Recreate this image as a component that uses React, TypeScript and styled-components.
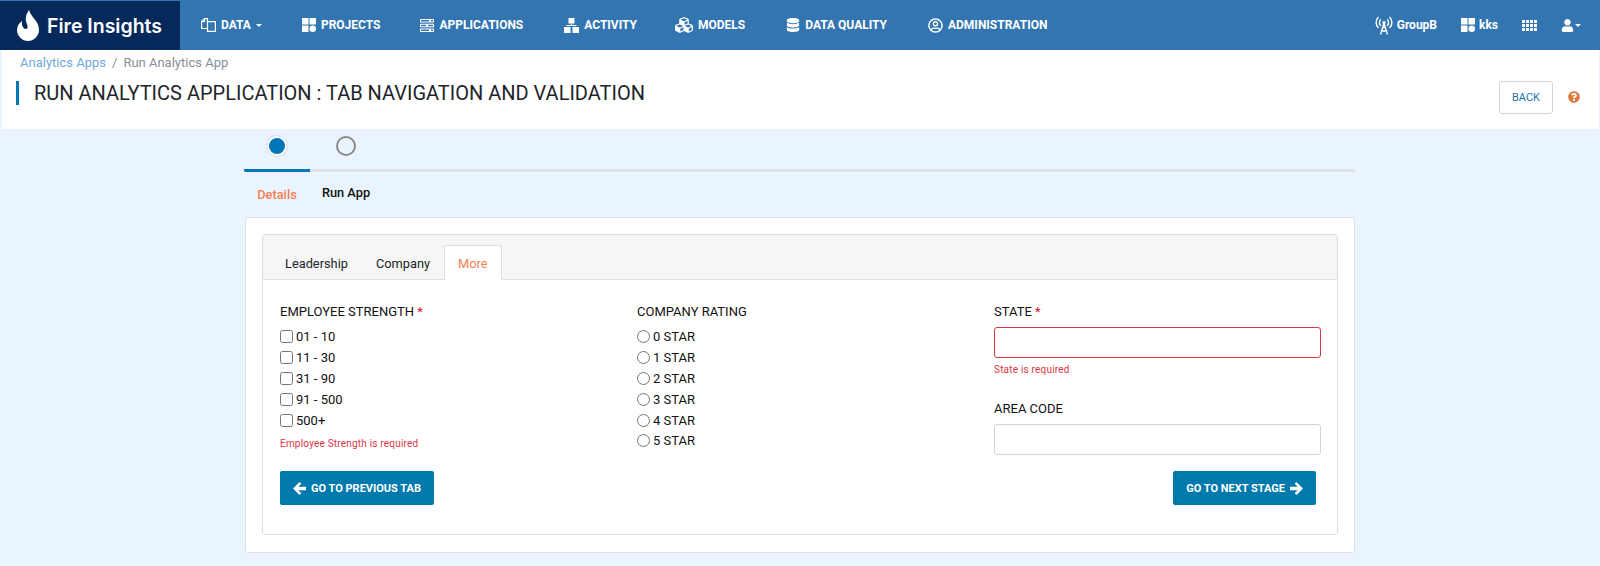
import React, { FC, ReactNode } from "react";
import styled, { createGlobalStyle } from "styled-components";
import {
  FaCubes,
  FaDatabase,
  FaQuestionCircle,
  FaRegUserCircle,
  FaUser,
} from "react-icons/fa";

const GlobalStyle = createGlobalStyle`
  html, body {
    margin: 0;
    padding: 0;
    height: 100%;
    background: #e9f4fe;
    font-family: Roboto, "Liberation Sans", sans-serif;
    color: #212529;
    overflow: hidden;
  }
  * {
    box-sizing: border-box;
  }
`;

const FlameLogo: FC = () => (
  <svg width="22" height="31" viewBox="0 0 22 31" fill="#fff">
    <path d="M12 0C13 4 16 7 19 11C21 14 22 17 22 20C22 26 17 31 11 31C5 31 0 26 0 20C0 16 2 13 5 11C4.500 15 6 19 9 19C11 19 11 16 9.500 13C8 9 9 4 12 0Z" />
  </svg>
);

const DataIcon: FC = () => (
  <svg width="15" height="14" viewBox="0 0 15 14" fill="none" stroke="#fff" strokeWidth="1.200">
    <path d="M6.500 3.500V0.600H3.500L0.600 3.500V10.500H6.500" />
    <path d="M9.500 3.600H6.500V13.400H14.400V3.600H9.500" />
    <path d="M3.500 0.600V3.500H0.600" />
  </svg>
);

const ProjectsIcon: FC = () => (
  <svg width="14" height="14" viewBox="0 0 14 14" fill="#fff">
    <rect x="0" y="0" width="6.500" height="6.500" />
    <rect x="7.500" y="0" width="6.500" height="6.500" />
    <rect x="0" y="7.500" width="6.500" height="6.500" />
    <circle cx="10.750" cy="10.750" r="3.250" />
  </svg>
);

const ApplicationsIcon: FC = () => (
  <svg width="14" height="13" viewBox="0 0 14 13" fill="#fff">
    <path
      fillRule="evenodd"
      d="M0 0H14V3.400H0ZM1 1V2.400H9V1ZM11 1V2.400H13V1ZM0 4.800H14V8.200H0ZM1 5.800V7.200H6V5.800ZM8 5.800V7.200H13V5.800ZM0 9.600H14V13H0ZM1 10.600V12H9V10.600ZM11 10.600V12H13V10.600Z"
    />
  </svg>
);

const ActivityIcon: FC = () => (
  <svg width="15" height="15" viewBox="0 0 15 15" fill="#fff">
    <rect x="4.500" y="0" width="6" height="5.500" />
    <rect x="7" y="5.500" width="1" height="2" />
    <rect x="2.500" y="7" width="10" height="1" />
    <rect x="0" y="9" width="6.500" height="6" />
    <rect x="8.500" y="9" width="6.500" height="6" />
  </svg>
);

const TowerIcon: FC = () => (
  <svg width="18" height="19" viewBox="0 0 18 19" fill="none" stroke="#fff" strokeWidth="1.400">
    <path d="M3.500 1C0.300 4 0.300 9 3.500 12" />
    <path d="M14.500 1C17.700 4 17.700 9 14.500 12" />
    <path d="M5.800 3.200C4 5 4 8 5.800 9.800" />
    <path d="M12.200 3.200C14 5 14 8 12.200 9.800" />
    <circle cx="9" cy="6.500" r="1.600" fill="#fff" stroke="none" />
    <path d="M9 7L5.500 18.500M9 7L12.500 18.500M6.500 15H11.500M7.500 11.500H10.500" />
  </svg>
);

const TableIcon: FC = () => (
  <svg width="15" height="11" viewBox="0 0 15 11" fill="#fff">
    {[0, 4, 8].map((y) =>
      [0, 4, 8, 12].map((x) => <rect key={`${x}-${y}`} x={x} y={y} width="3" height="3" />)
    )}
  </svg>
);

const LeftArrow: FC = () => (
  <svg width="13" height="13" viewBox="0 0 13 13" fill="#fff">
    <path d="M6.500 0L0 6.500L6.500 13L8.300 11.200L5.300 8.200H13V4.800H5.300L8.300 1.800Z" />
  </svg>
);

const RightArrow: FC = () => (
  <svg width="13" height="13" viewBox="0 0 13 13" fill="#fff">
    <path d="M6.500 0L13 6.500L6.500 13L4.700 11.200L7.700 8.200H0V4.800H7.700L4.700 1.800Z" />
  </svg>
);

const Caret = styled.span`
  display: inline-block;
  width: 0;
  height: 0;
  border-top: 3.800px solid #fff;
  border-left: 3.800px solid transparent;
  border-right: 3.800px solid transparent;
`;

const Page = styled.div`
  display: flex;
  flex-direction: column;
  min-height: 566px;
`;

const NavBar = styled.nav`
  display: flex;
  align-items: stretch;
  height: 50px;
  background: #3375b0;
`;

const Brand = styled.div`
  display: flex;
  align-items: center;
  gap: 8px;
  width: 180px;
  height: 49px;
  margin-top: 1px;
  padding-left: 17px;
  background: #06295b;
  color: #fff;
  font-family: Inter, "Open Sans", sans-serif;
  font-size: 19.500px;
  font-weight: 600;
  white-space: nowrap;
`;

const NavLeft = styled.div`
  display: flex;
  align-items: center;
  gap: 40px;
  margin-left: 21px;
  flex: 1;
`;

const NavRight = styled.div`
  display: flex;
  align-items: center;
  gap: 24px;
  padding-right: 19px;
`;

const NavItem = styled.a<{ $extra?: number; $gap?: number }>`
  display: flex;
  align-items: center;
  gap: ${(p) => p.$gap ?? 5}px;
  margin-left: ${(p) => p.$extra ?? 0}px;
  color: #fff;
  font-size: 12px;
  font-weight: 700;
  white-space: nowrap;
  svg {
    flex: none;
  }
`;

const PageHead = styled.header`
  display: flex;
  justify-content: space-between;
  height: 79px;
  margin: 0 1px 0 2px;
  background: #fff;
`;

const HeadLeft = styled.div`
  display: flex;
  flex-direction: column;
`;

const Crumbs = styled.div`
  display: flex;
  gap: 6px;
  height: 31px;
  padding: 5px 0 0 18px;
  font-size: 13px;
  line-height: 15px;
  color: #868e96;
`;

const CrumbLink = styled.a`
  color: #6fa8dc;
`;

const Title = styled.h1`
  margin: 0 0 0 14px;
  padding-left: 15px;
  height: 24px;
  border-left: 3px solid #0076b4;
  font-size: 20px;
  font-weight: 400;
  line-height: 24px;
  color: #212529;
  white-space: nowrap;
`;

const HeadRight = styled.div`
  display: flex;
  align-items: center;
  gap: 15px;
  height: 32px;
  margin-top: 31px;
  padding-right: 19px;
  color: #dc7b3c;
`;

const BackButton = styled.button`
  width: 54px;
  height: 33px;
  padding: 0;
  background: #fff;
  border: 1px solid #ced4da;
  border-radius: 3px;
  color: #1f6fa8;
  font-family: inherit;
  font-size: 11px;
  font-weight: 400;
`;

const Wizard = styled.main`
  width: 1111px;
  margin: 0 auto 0 244px;
`;

const Steps = styled.div`
  display: flex;
  height: 43px;
  border-bottom: 3px solid #dfe1e6;
`;

const Step = styled.div<{ $active?: boolean }>`
  display: flex;
  justify-content: center;
  align-items: center;
  width: 66px;
  height: 43px;
  padding-bottom: 6px;
  margin-right: 3px;
  border-bottom: 3px solid ${(p) => (p.$active ? "#0076b9" : "transparent")};
  border-radius: 0 0 0 2px;
`;

const StepDot = styled.span<{ $active?: boolean }>`
  width: 20px;
  height: 20px;
  border-radius: 50%;
  ${(p) =>
    p.$active
      ? `background: #0076b9; border: 2px solid #fff; box-shadow: 0 0 2px rgba(0,0,0,.25);`
      : `background: transparent; border: 2px solid #8a8a8a;`}
`;

const StepLabels = styled.div`
  display: flex;
  height: 45px;
  font-size: 12.800px;
  font-weight: 500;
`;

const StepLabel = styled.div<{ $active?: boolean }>`
  width: ${(p) => (p.$active ? 66 : 72)}px;
  text-align: center;
  padding-top: ${(p) => (p.$active ? 15 : 13)}px;
  color: ${(p) => (p.$active ? "#f97f51" : "#111")};
`;

const OuterCard = styled.section`
  height: 336px;
  margin-left: 1px;
  padding: 16px 16px 0;
  background: #fff;
  border: 1px solid #dcdfe3;
  border-radius: 3px;
`;

const InnerCard = styled.div`
  height: 301px;
  border: 1px solid #dcdfe3;
  border-radius: 3px;
`;

const TabBar = styled.div`
  display: flex;
  align-items: flex-end;
  height: 45px;
  padding-left: 8px;
  background: #f6f6f6;
  border-bottom: 1px solid #dcdfe3;
`;

const Tab = styled.div<{ $active?: boolean }>`
  height: 35px;
  margin-bottom: -1px;
  padding: 0 13px;
  border: 1px solid ${(p) => (p.$active ? "#dcdfe3" : "transparent")};
  border-bottom-color: ${(p) => (p.$active ? "#fff" : "transparent")};
  border-radius: 3px 3px 0 0;
  background: ${(p) => (p.$active ? "#fff" : "transparent")};
  color: ${(p) => (p.$active ? "#f97f51" : "#212529")};
  font-size: 12.800px;
  line-height: 35px;
`;

const FormGrid = styled.div`
  display: grid;
  grid-template-columns: repeat(3, 357px);
  padding: 0 2px;
  height: 176px;
`;

const Column = styled.div`
  padding: 24px 15px 0;
`;

const FieldLabel = styled.label<{ $top?: number }>`
  display: block;
  height: 16px;
  margin-top: ${(p) => p.$top ?? 0}px;
  font-size: 13px;
  line-height: 16px;
  color: #111;
  white-space: nowrap;
`;

const Required = styled.span`
  color: #e8112d;
`;

const OptionList = styled.div`
  display: flex;
  flex-direction: column;
  margin-top: 6px;
`;

const Option = styled.label`
  display: flex;
  align-items: center;
  height: 20.900px;
  font-size: 13px;
  color: #111;
  input {
    width: 13px;
    height: 13px;
    margin: 0 3px 0 0;
  }
`;

const ErrorText = styled.div<{ $top: number }>`
  margin-top: ${(p) => p.$top}px;
  height: 12px;
  font-size: 10px;
  line-height: 12px;
  letter-spacing: 0.200px;
  color: #dc3545;
`;

const TextInput = styled.input<{ $invalid?: boolean }>`
  display: block;
  width: 100%;
  height: 31px;
  margin-top: 7px;
  background: #fff;
  border: 1px solid ${(p) => (p.$invalid ? "#dc3545" : "#ced4da")};
  border-radius: 3px;
  outline: none;
`;

const Actions = styled.div`
  display: flex;
  justify-content: space-between;
  padding: 15px 21px 0 17px;
`;

const ActionButton = styled.button`
  display: flex;
  align-items: center;
  gap: 5px;
  height: 34px;
  padding: 0 13px;
  background: #0079ac;
  border: none;
  border-radius: 2px;
  color: #fff;
  font-family: inherit;
  font-size: 11px;
  font-weight: 700;
  white-space: nowrap;
`;

const Field: FC<{ label: string; required?: boolean }> = ({ label, required }) => (
  <FieldLabel>
    {label} {required && <Required>*</Required>}
  </FieldLabel>
);

const navItems: { icon: ReactNode; label: string; caret?: boolean; extra?: number }[] = [
  { icon: <DataIcon />, label: "DATA", caret: true },
  { icon: <ProjectsIcon />, label: "PROJECTS" },
  { icon: <ApplicationsIcon />, label: "APPLICATIONS" },
  { icon: <ActivityIcon />, label: "ACTIVITY", extra: 1 },
  { icon: <FaCubes size={18} />, label: "MODELS", extra: -2 },
  { icon: <FaDatabase size={14} />, label: "DATA QUALITY", extra: 1 },
  { icon: <FaRegUserCircle size={15} />, label: "ADMINISTRATION", extra: 1 },
];

const strengths = ["01 - 10", "11 - 30", "31 - 90", "91 - 500", "500+"];
const ratings = ["0 STAR", "1 STAR", "2 STAR", "3 STAR", "4 STAR", "5 STAR"];

const App: FC = () => {
  return (
    <Page>
      <GlobalStyle />
      <NavBar>
        <Brand>
          <FlameLogo />
          Fire Insights
        </Brand>
        <NavLeft>
          {navItems.map((item) => (
            <NavItem key={item.label} $extra={item.extra}>
              {item.icon}
              {item.label}
              {item.caret && <Caret />}
            </NavItem>
          ))}
        </NavLeft>
        <NavRight>
          <NavItem $gap={4}>
            <TowerIcon />
            GroupB
          </NavItem>
          <NavItem $gap={4}>
            <ProjectsIcon />
            kks
          </NavItem>
          <NavItem>
            <TableIcon />
          </NavItem>
          <NavItem $gap={1}>
            <FaUser size={13} />
            <Caret />
          </NavItem>
        </NavRight>
      </NavBar>

      <PageHead>
        <HeadLeft>
          <Crumbs>
            <CrumbLink>Analytics Apps</CrumbLink>
            <span>/</span>
            <span>Run Analytics App</span>
          </Crumbs>
          <Title>RUN ANALYTICS APPLICATION : TAB NAVIGATION AND VALIDATION</Title>
        </HeadLeft>
        <HeadRight>
          <BackButton>BACK</BackButton>
          <FaQuestionCircle size={12} />
        </HeadRight>
      </PageHead>

      <Wizard>
        <Steps>
          <Step $active>
            <StepDot $active />
          </Step>
          <Step>
            <StepDot />
          </Step>
        </Steps>
        <StepLabels>
          <StepLabel $active>Details</StepLabel>
          <StepLabel>Run App</StepLabel>
        </StepLabels>
        <OuterCard>
          <InnerCard>
            <TabBar>
              <Tab>Leadership</Tab>
              <Tab>Company</Tab>
              <Tab $active>More</Tab>
            </TabBar>
            <FormGrid>
              <Column>
                <Field label="EMPLOYEE STRENGTH" required />
                <OptionList>
                  {strengths.map((s) => (
                    <Option key={s}>
                      <input type="checkbox" />
                      {s}
                    </Option>
                  ))}
                </OptionList>
                <ErrorText $top={8}>Employee Strength is required</ErrorText>
              </Column>
              <Column>
                <Field label="COMPANY RATING" />
                <OptionList>
                  {ratings.map((r) => (
                    <Option key={r}>
                      <input type="radio" name="rating" />
                      {r}
                    </Option>
                  ))}
                </OptionList>
              </Column>
              <Column>
                <Field label="STATE" required />
                <TextInput $invalid />
                <ErrorText $top={6}>State is required</ErrorText>
                <FieldLabel $top={25}>AREA CODE</FieldLabel>
                <TextInput />
              </Column>
            </FormGrid>
            <Actions>
              <ActionButton>
                <LeftArrow />
                GO TO PREVIOUS TAB
              </ActionButton>
              <ActionButton>
                GO TO NEXT STAGE
                <RightArrow />
              </ActionButton>
            </Actions>
          </InnerCard>
        </OuterCard>
      </Wizard>
    </Page>
  );
};

export default App;
